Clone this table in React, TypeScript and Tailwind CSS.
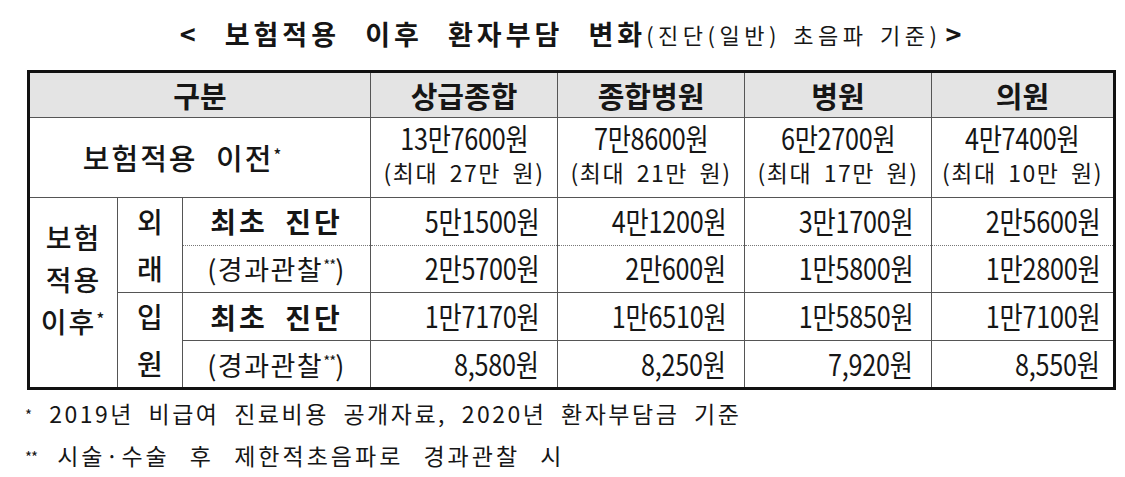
import React from "react";

const cols = ["상급종합", "종합병원", "병원", "의원"];
const before = ["13만7600원", "7만8600원", "6만2700원", "4만7400원"];
const maxes = ["27", "21", "17", "10"];
const outFirst = ["5만1500원", "4만1200원", "3만1700원", "2만5600원"];
const outFollow = ["2만5700원", "2만600원", "1만5800원", "1만2800원"];
const inFirst = ["1만7170원", "1만6510원", "1만5850원", "1만7100원"];
const inFollow = ["8,580원", "8,250원", "7,920원", "8,550원"];
const pr = ["pr-[18px]", "pr-[18px]", "pr-[18px]", "pr-[13px]"];

function Val({ v }: { v: string }) {
  return (
    <span className="inline-block origin-right scale-x-[0.84] text-[30px] leading-none tracking-[-0.3px]">
      {v}
    </span>
  );
}

function Stars() {
  return <span className="relative -top-[9px] text-[15px] tracking-[-1px]">**</span>;
}

export default function App() {
  const cell = "border border-[#555] p-0";
  return (
    <div className="w-[1125px] h-[477px] bg-white text-[#161616] font-['Noto_Sans_CJK_KR',sans-serif]">
      <div className="h-[68px] pl-[16px] flex items-center justify-center whitespace-pre">
        <span className="text-[27px] font-bold tracking-[4px] [word-spacing:15px]">{"< 보험적용 이후 환자부담 변화"}</span>
        <span className="text-[22px] tracking-[4.5px] [word-spacing:3px]">{"(진단(일반) 초음파 기준)"}</span>
        <span className="ml-[4px] text-[27px] font-bold">{">"}</span>
      </div>
      <table className="mt-[2px] ml-[27px] w-[1086px] table-fixed border-collapse border-[3px] border-[#111]">
        <colgroup>
          <col className="w-[89px]" />
          <col className="w-[65px]" />
          <col className="w-[188px]" />
          <col className="w-[187px]" />
          <col className="w-[187px]" />
          <col className="w-[187px]" />
          <col className="w-[183px]" />
        </colgroup>
        <tbody>
          <tr className="h-[46px] bg-[#e4e4e4]">
            <td colSpan={3} className={`${cell} text-center text-[29px] font-bold leading-none`}>
              구분
            </td>
            {cols.map((c) => (
              <td key={c} className={`${cell} text-center text-[29px] font-bold leading-none`}>
                {c}
              </td>
            ))}
          </tr>
          <tr className="h-[80px]">
            <td colSpan={3} className={`${cell} pr-[34px] text-center text-[29px] font-medium leading-none tracking-[2px] [word-spacing:10px]`}>
              보험적용 이전<span className="relative -top-[9px] text-[16px]">*</span>
            </td>
            {before.map((b, i) => (
              <td key={b} className={`${cell} pb-[10px] text-center`}>
                <div className="flex flex-col items-center gap-[9px]">
                  <span className="inline-block origin-center scale-x-[0.84] text-[30px] leading-none tracking-[-0.3px]">
                    {b}
                  </span>
                  <span className="text-[23px] leading-none tracking-[1.5px] [word-spacing:5px] whitespace-pre">
                    {`(최대 ${maxes[i]}만 원)`}
                  </span>
                </div>
              </td>
            ))}
          </tr>
          <tr className="h-[47px]">
            <td rowSpan={4} className={`${cell} pb-[22px] text-center text-[28px] font-medium leading-[42px] tracking-[2px]`}>
              보험
              <br />
              적용
              <br />
              이후<span className="relative -top-[8px] text-[16px]">*</span>
            </td>
            <td rowSpan={2} className={`${cell} text-center text-[28px] font-medium leading-[47px]`}>
              외
              <br />래
            </td>
            <td className={`${cell} [border-bottom-style:dotted] border-b-[#777] text-center text-[28px] font-bold leading-none tracking-[3px] [word-spacing:8px]`}>
              최초 진단
            </td>
            {outFirst.map((v, i) => (
              <td key={v} className={`${cell} [border-bottom-style:dotted] border-b-[#777] text-right ${pr[i]}`}>
                <Val v={v} />
              </td>
            ))}
          </tr>
          <tr className="h-[47px]">
            <td className={`${cell} border-t-0 text-center text-[27px] leading-none tracking-[1.5px]`}>
              (경과관찰<Stars />)
            </td>
            {outFollow.map((v, i) => (
              <td key={v} className={`${cell} border-t-0 text-right ${pr[i]}`}>
                <Val v={v} />
              </td>
            ))}
          </tr>
          <tr className="h-[47px]">
            <td rowSpan={2} className={`${cell} text-center text-[28px] font-medium leading-[47px]`}>
              입
              <br />원
            </td>
            <td className={`${cell} text-center text-[28px] font-bold leading-none tracking-[3px] [word-spacing:8px]`}>
              최초 진단
            </td>
            {inFirst.map((v, i) => (
              <td key={v} className={`${cell} text-right ${pr[i]}`}>
                <Val v={v} />
              </td>
            ))}
          </tr>
          <tr className="h-[47px]">
            <td className={`${cell} text-center text-[27px] leading-none tracking-[1.5px]`}>
              (경과관찰<Stars />)
            </td>
            {inFollow.map((v, i) => (
              <td key={v} className={`${cell} text-right ${pr[i]}`}>
                <Val v={v} />
              </td>
            ))}
          </tr>
        </tbody>
      </table>
      <div className="mt-[4px] pl-[25px] text-[23px] leading-[38px] whitespace-pre">
        <div className="tracking-[2.5px] [word-spacing:7px]">
          <span className="relative -top-[2px] text-[15px]">*</span>
          {" 2019년 비급여 진료비용 공개자료, 2020년 환자부담금 기준"}
        </div>
        <div className="tracking-[3px] [word-spacing:12px]">
          <span className="relative -top-[2px] text-[15px] tracking-[-1px]">**</span>
          {" 시술·수술 후 제한적초음파로 경과관찰 시"}
        </div>
      </div>
    </div>
  );
}
